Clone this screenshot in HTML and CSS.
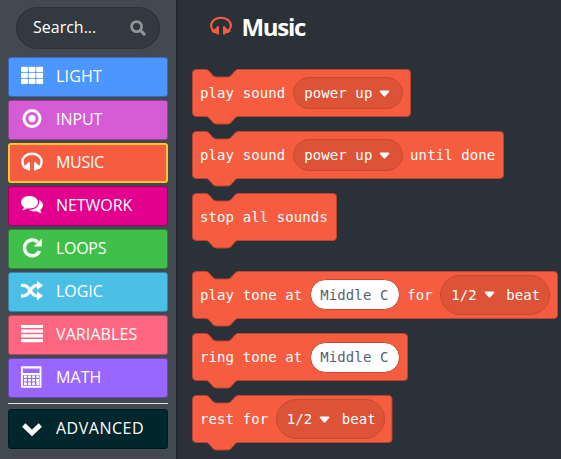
FILE: index.html
```
<!DOCTYPE html>
<html lang="en">
<head>
<meta charset="utf-8">
<title>Music</title>
<link rel="stylesheet" href="styles.css">
</head>
<body>
<div class="editor">
  <aside class="toolbox">
    <div class="search"><span>Search...</span>
      <svg class="search-icon" width="16" height="16" viewBox="0 0 16 16"><circle cx="6.6" cy="6.6" r="5" fill="none" stroke="currentColor" stroke-width="2.8"/><path d="M10.5 10.5L14.1 14.1" stroke="currentColor" stroke-width="3" stroke-linecap="round"/></svg>
    </div>
    <nav class="categories">
      <div class="category light"><svg viewBox="0 0 24 24"><g fill="currentColor"><rect x="1" y="2.8" width="6.9" height="5.2" rx="1"/><rect x="8.6" y="2.8" width="6.9" height="5.2" rx="1"/><rect x="16.2" y="2.8" width="6.9" height="5.2" rx="1"/><rect x="1" y="8.8" width="6.9" height="5.2" rx="1"/><rect x="8.6" y="8.8" width="6.9" height="5.2" rx="1"/><rect x="16.2" y="8.8" width="6.9" height="5.2" rx="1"/><rect x="1" y="14.8" width="6.9" height="5.2" rx="1"/><rect x="8.6" y="14.8" width="6.9" height="5.2" rx="1"/><rect x="16.2" y="14.8" width="6.9" height="5.2" rx="1"/></g></svg><span>LIGHT</span></div>
      <div class="category input"><svg viewBox="0 0 24 24"><circle cx="12" cy="11.6" r="8" fill="none" stroke="currentColor" stroke-width="3"/><circle cx="12" cy="11.6" r="3.6" fill="currentColor"/></svg><span>INPUT</span></div>
      <div class="category music selected"><svg viewBox="0 0 24 24"><path d="M3.8 16A9 9 0 0 1 2.4 11.8C2.4 6.8 7 3.7 12 3.7S21.6 6.8 21.6 11.8A9 9 0 0 1 20.2 16" fill="none" stroke="currentColor" stroke-width="2.4"/><path d="M10 12.3V20.5H7.8V19.6C5 19.4 3.3 18.4 2.3 16.5C4.7 15.9 6.1 14.9 7.8 13.3V12.3ZM14 12.3V20.5H16.2V19.6C19 19.4 20.7 18.4 21.7 16.5C19.3 15.9 17.9 14.9 16.2 13.3V12.3Z" fill="currentColor"/></svg><span>MUSIC</span></div>
      <div class="category network"><svg viewBox="0 0 24 24"><path d="M9.5 3C14.4 3 18 5.7 18 9.3S14.4 15.5 9.5 15.5Q8.5 15.5 7.4 15.3Q5.3 17 2.2 17.3Q3.7 15.9 4 14.3C2.2 13.1 1 11.4 1 9.3C1 5.7 4.6 3 9.5 3ZM19.3 7C21.5 8.2 23 10 23 12.3C23 14.2 21.9 15.8 20.3 17Q20.5 18.6 21.8 20.2Q18.8 19.8 17 18.2C13.8 18.7 10.8 18.2 8.8 16.8C15.2 16.9 19.8 13.3 19.3 7Z" fill="currentColor"/></svg><span>NETWORK</span></div>
      <div class="category loops"><svg viewBox="0 0 24 24"><path d="M17.6 5.9A7.9 7.9 0 1 0 19.6 15" fill="none" stroke="currentColor" stroke-width="3.4"/><path d="M21.8 2.4V10.6H13.6Z" fill="currentColor"/></svg><span>LOOPS</span></div>
      <div class="category logic"><svg viewBox="0 0 24 24"><path d="M1 6.4H3.5C10.5 6.4 10 16.8 17 16.8H18M1 16.8H3.5C10.5 16.8 10 6.4 17 6.4H18" fill="none" stroke="currentColor" stroke-width="3.2"/><path d="M17 1.7L23 6.4L17 11ZM17 12.2L23 16.8L17 21.5Z" fill="currentColor"/></svg><span>LOGIC</span></div>
      <div class="category variables"><svg viewBox="0 0 24 24"><path d="M1 4.5H23M1 9.2H23M1 13.9H23M1 18.6H23" stroke="currentColor" stroke-width="3.2"/></svg><span>VARIABLES</span></div>
      <div class="category math"><svg viewBox="0 0 24 24"><path d="M1.9 2.3H20.5V21.7H1.9ZM2 9H20.5" fill="none" stroke="currentColor" stroke-width="1.9"/><path d="M4 3.7H18.5" stroke="currentColor" stroke-width="1" opacity=".45"/><path d="M4 11.8H18.8M4 15.3H18.8M4 18.8H15" stroke="currentColor" stroke-width="2.6" stroke-dasharray="2.8 1.3"/><path d="M17.7 14V20" stroke="currentColor" stroke-width="2.6"/></svg><span>MATH</span></div>
      <hr class="divider">
      <div class="category advanced"><svg viewBox="0 0 24 24"><path d="M3.7 9L12 17L20.3 9" fill="none" stroke="currentColor" stroke-width="4.8"/></svg><span>ADVANCED</span></div>
    </nav>
  </aside>
  <main class="flyout">
    <h1 class="heading"><svg viewBox="0 0 24 24"><path d="M3.8 16A9 9 0 0 1 2.1 11.8C2.1 6.8 7 3.7 12 3.7S21.9 6.8 21.9 11.8A9 9 0 0 1 20.2 16" fill="none" stroke="currentColor" stroke-width="2.1"/><path d="M10 12.3V20.5H7.8V19.6C5 19.4 3.3 18.4 2 16.5C4.7 15.9 6.1 14.9 7.8 13.3V12.3ZM14 12.3V20.5H16.2V19.6C19 19.4 20.7 18.4 22 16.5C19.3 15.9 17.9 14.9 16.2 13.3V12.3Z" fill="currentColor"/></svg><span>Music</span></h1>
    <div class="blocks">
      <div class="block"><svg class="shape" width="220" height="57"><path d="M4.5.5H14Q15.5.5 17 2L20 5.5Q22 8 24 8H36Q38 8 40 5.5L43 2Q44.5.5 46 .5H215Q218.5.5 218.5 4V44Q218.5 47.5 215 47.5H46Q44.5 47.5 43 49L40 52.5Q38 55 36 55H24Q22 55 20 52.5L17 49Q15.5 47.5 14 47.5H4.5Q.5 47.5 .5 44V4Q.5.5 4.5.5Z"/></svg><span>play sound</span><span class="field sound">power up<svg class="caret" viewBox="0 0 11 7"><path d="M1.5.5H9.5Q11 .8 10 2L6.5 6Q5.5 7 4.5 6L1 2Q0 .8 1.5.5Z"/></svg></span></div>
      <div class="block"><svg class="shape" width="313" height="57"><path d="M4.5.5H14Q15.5.5 17 2L20 5.5Q22 8 24 8H36Q38 8 40 5.5L43 2Q44.5.5 46 .5H308Q311.5.5 311.5 4V44Q311.5 47.5 308 47.5H46Q44.5 47.5 43 49L40 52.5Q38 55 36 55H24Q22 55 20 52.5L17 49Q15.5 47.5 14 47.5H4.5Q.5 47.5 .5 44V4Q.5.5 4.5.5Z"/></svg><span>play sound</span><span class="field sound">power up<svg class="caret" viewBox="0 0 11 7"><path d="M1.5.5H9.5Q11 .8 10 2L6.5 6Q5.5 7 4.5 6L1 2Q0 .8 1.5.5Z"/></svg></span><span>until done</span></div>
      <div class="block group-end"><svg class="shape" width="146" height="57"><path d="M4.5.5H14Q15.5.5 17 2L20 5.5Q22 8 24 8H36Q38 8 40 5.5L43 2Q44.5.5 46 .5H141Q144.5.5 144.5 4V44Q144.5 47.5 141 47.5H46Q44.5 47.5 43 49L40 52.5Q38 55 36 55H24Q22 55 20 52.5L17 49Q15.5 47.5 14 47.5H4.5Q.5 47.5 .5 44V4Q.5.5 4.5.5Z"/></svg><span>stop all sounds</span></div>
      <div class="block"><svg class="shape" width="367" height="57"><path d="M4.5.5H14Q15.5.5 17 2L20 5.5Q22 8 24 8H36Q38 8 40 5.5L43 2Q44.5.5 46 .5H362Q365.5.5 365.5 4V44Q365.5 47.5 362 47.5H46Q44.5 47.5 43 49L40 52.5Q38 55 36 55H24Q22 55 20 52.5L17 49Q15.5 47.5 14 47.5H4.5Q.5 47.5 .5 44V4Q.5.5 4.5.5Z"/></svg><span>play tone at</span><span class="field note">Middle C</span><span>for</span><span class="field beat">1/2<svg class="caret" viewBox="0 0 11 7"><path d="M1.5.5H9.5Q11 .8 10 2L6.5 6Q5.5 7 4.5 6L1 2Q0 .8 1.5.5Z"/></svg><span class="unit">beat</span></span></div>
      <div class="block"><svg class="shape" width="217" height="57"><path d="M4.5.5H14Q15.5.5 17 2L20 5.5Q22 8 24 8H36Q38 8 40 5.5L43 2Q44.5.5 46 .5H212Q215.5.5 215.5 4V44Q215.5 47.5 212 47.5H46Q44.5 47.5 43 49L40 52.5Q38 55 36 55H24Q22 55 20 52.5L17 49Q15.5 47.5 14 47.5H4.5Q.5 47.5 .5 44V4Q.5.5 4.5.5Z"/></svg><span>ring tone at</span><span class="field note">Middle C</span></div>
      <div class="block"><svg class="shape" width="202" height="57"><path d="M4.5.5H14Q15.5.5 17 2L20 5.5Q22 8 24 8H36Q38 8 40 5.5L43 2Q44.5.5 46 .5H196.5Q200 .5 200 4V44Q200 47.5 196.5 47.5H46Q44.5 47.5 43 49L40 52.5Q38 55 36 55H24Q22 55 20 52.5L17 49Q15.5 47.5 14 47.5H4.5Q.5 47.5 .5 44V4Q.5.5 4.5.5Z"/></svg><span>rest for</span><span class="field beat">1/2<svg class="caret" viewBox="0 0 11 7"><path d="M1.5.5H9.5Q11 .8 10 2L6.5 6Q5.5 7 4.5 6L1 2Q0 .8 1.5.5Z"/></svg><span class="unit">beat</span></span></div>
    </div>
  </main>
</div>
</body>
</html>
```
FILE: styles.css
```
* { box-sizing: border-box; }
body { margin: 0; background: #2b3138; color: #fff; font-family: "Open Sans", "Noto Sans", sans-serif; overflow: hidden; }
.editor { display: flex; width: 561px; height: 459px; }
.toolbox { flex: none; width: 178px; height: 459px; padding: 7px 8px 0; background: #424950; border-right: 2px solid #23282d; }
.search { display: flex; align-items: center; justify-content: space-between; width: 144px; height: 42px; margin-left: 8px; padding: 0 13px 2px 16px; border: 1px solid #2a3036; border-radius: 21px; background: #333940; font-size: 16px; }
.search-icon { color: #929598; position: relative; top: 1px; }
.categories { display: flex; flex-direction: column; gap: 3px; width: 160px; margin-top: 8px; }
.category { display: flex; align-items: center; height: 40px; padding: 0 0 2px 11px; border: 1px solid; border-radius: 3px; font-size: 16px; letter-spacing: -.05px; }
.category svg { width: 24px; height: 24px; margin-right: 12px; flex: none; color: #fff; }
.category span { color: #fff; }
.light { background: #4b96ff; border-color: #356bb4; letter-spacing: .2px; }
.input { background: #d65cd6; border-color: #964196; }
.music { background: #f65c3f; letter-spacing: -.3px; }
.network { background: #e3008c; border-color: #9f0062; }
.loops { background: #40bf4a; border-color: #2d8634; letter-spacing: -.3px; }
.logic { background: #4cbfe6; border-color: #3586a1; }
.variables { background: #ff6680; border-color: #b3475a; letter-spacing: .1px; }
.math { background: #9966ff; border-color: #6b47b3; letter-spacing: .1px; }
.advanced { background: #00272b; border-color: #001b1e; letter-spacing: .5px; }
.selected { border: 2px solid #ffc52b; padding: 0 0 2px 10px; }
.divider { width: 160px; height: 1px; margin: 2px 0; border: 0; background: #dfe1e3; }
.flyout { position: relative; z-index: 0; flex: 1; padding: 11px 0 0 14px; background: #2b3138; }
.heading { display: flex; align-items: center; height: 30px; margin: 0 0 28px 16.5px; font-size: 24px; font-weight: 700; letter-spacing: -1.3px; }
.heading svg { width: 24px; height: 24px; margin-right: 9px; color: #f65c3f; }
.blocks { display: flex; flex-direction: column; gap: 14.2px; }
.block { position: relative; display: flex; align-items: center; height: 48px; padding-left: 8px; gap: 7.4px; font: 14px/20px "DejaVu Sans Mono", monospace; letter-spacing: .1px; white-space: pre; }
.group-end { margin-bottom: 15.4px; }
.shape { position: absolute; left: 0; top: 0; z-index: -1; fill: #f65c3f; stroke: #b8452f; stroke-width: 1; }
.field { display: flex; align-items: center; }
.caret { width: 11px; height: 7px; margin-left: 7px; fill: #fff; }
.sound { width: 110px; height: 32px; padding-left: 10.5px; border: 1px solid #c54a32; border-radius: 16px; background: #dd5338; }
.note { width: 90px; height: 31px; padding-left: 9.5px; border: 1px solid #c54a32; border-radius: 16px; background: #fff; color: #575e75; }
.beat { width: 109.5px; height: 40px; padding-left: 10px; border: 1px solid #c54a32; border-radius: 20px; background: #dd5338; }
.unit { margin-left: 11.5px; }
```
